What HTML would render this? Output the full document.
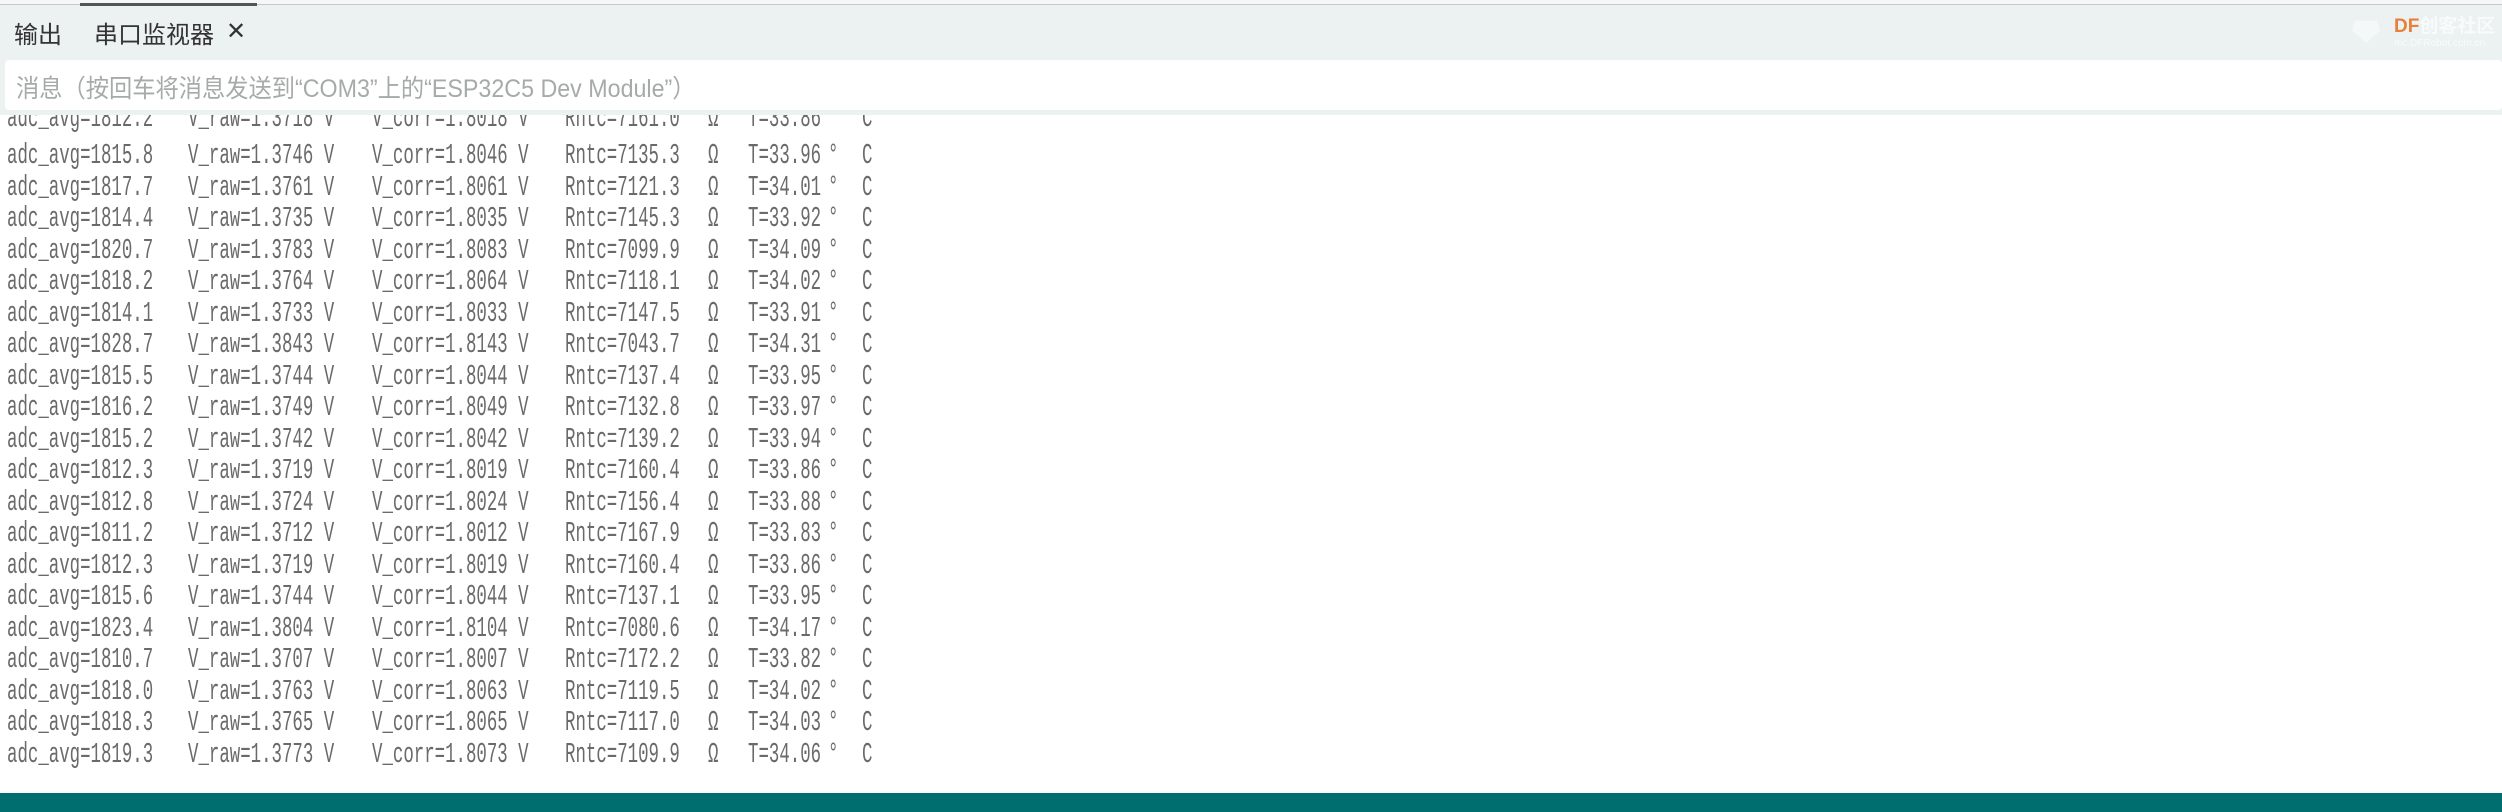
<!DOCTYPE html>
<html><head><meta charset="utf-8"><style>
*{margin:0;padding:0;box-sizing:border-box}
body{width:2502px;height:812px;overflow:hidden;background:#fff;position:relative;font-family:"Liberation Sans","Noto Sans CJK SC",sans-serif}
#top{position:absolute;left:0;top:0;width:2502px;height:5px;background:#f6f7f7;border-bottom:1px solid #c8c8c8}
#tabbar{position:absolute;left:80px;top:3px;width:177px;height:3px;background:#555}
#head{position:absolute;left:0;top:5px;width:2502px;height:110px;background:#ecf1f1}
.t{position:absolute;top:10px;font-size:24px;color:#333;white-space:nowrap}
#inp{position:absolute;left:5px;top:60px;width:2497px;height:50px;background:#fff;border-radius:4px}
#ph{position:absolute;left:11px;top:9px;font-size:25px;color:#a7aaaa;transform:scaleX(.93);transform-origin:left;white-space:nowrap}
#logo{position:absolute;left:2394px;top:6px;font-size:19px;font-weight:bold;color:#f8fbfb}
#logo small{display:block;font-size:10px;font-weight:normal;margin-top:0px}
#ico{position:absolute;left:2352px;top:10px;width:28px;height:28px;background:#f4f8f8;clip-path:polygon(10% 20%,90% 20%,100% 55%,50% 100%,0 55%)}
#log{position:absolute;left:0;top:115px;width:2502px;height:678px;overflow:hidden}
.l{position:absolute;height:32px;width:1000px;color:#6a6a6a;font-family:"Liberation Mono",monospace;font-size:29px;line-height:32px}
.l span{position:absolute;top:0;white-space:pre;transform:scaleX(.6);transform-origin:left}
#bot{position:absolute;left:0;top:793px;width:2502px;height:19px;background:#006e6e}
</style></head><body>
<div id="top"></div>
<div id="head">
<div class="t" style="left:14px">输出</div>
<div class="t" style="left:94px">串口监视器</div>
<div class="t" style="left:226px;font-size:24px;top:12px">✕</div>
<div id="ico"></div>
<div id="logo"><span style="color:#e8803a">DF</span>创客社区<small>mc.DFRobot.com.cn</small></div>
</div>
<div id="tabbar"></div>
<div id="inp"><div id="ph">消息（按回车将消息发送到“COM3”上的“ESP32C5 Dev Module”）</div></div>
<div id="log">
<script>
var d=[["1812.2","1.3718","1.8018","7161.0","33.86"],
["1815.8","1.3746","1.8046","7135.3","33.96"],["1817.7","1.3761","1.8061","7121.3","34.01"],["1814.4","1.3735","1.8035","7145.3","33.92"],["1820.7","1.3783","1.8083","7099.9","34.09"],["1818.2","1.3764","1.8064","7118.1","34.02"],["1814.1","1.3733","1.8033","7147.5","33.91"],["1828.7","1.3843","1.8143","7043.7","34.31"],["1815.5","1.3744","1.8044","7137.4","33.95"],["1816.2","1.3749","1.8049","7132.8","33.97"],["1815.2","1.3742","1.8042","7139.2","33.94"],["1812.3","1.3719","1.8019","7160.4","33.86"],["1812.8","1.3724","1.8024","7156.4","33.88"],["1811.2","1.3712","1.8012","7167.9","33.83"],["1812.3","1.3719","1.8019","7160.4","33.86"],["1815.6","1.3744","1.8044","7137.1","33.95"],["1823.4","1.3804","1.8104","7080.6","34.17"],["1810.7","1.3707","1.8007","7172.2","33.82"],["1818.0","1.3763","1.8063","7119.5","34.02"],["1818.3","1.3765","1.8065","7117.0","34.03"],["1819.3","1.3773","1.8073","7109.9","34.06"]];
var h="";
for(var i=0;i<d.length;i++){var r=d[i];var y=(i==0?-12:25+(i-1)*31.5);
h+='<div class="l" style="top:'+y+'px"><span style="left:7px">adc_avg='+r[0]+'</span><span style="left:188px">V_raw='+r[1]+' V</span><span style="left:372px">V_corr='+r[2]+' V</span><span style="left:565px">Rntc='+r[3]+'</span><span style="left:708px">Ω</span><span style="left:748px">T='+r[4]+'</span><span style="left:828px">°</span><span style="left:862px">C</span></div>';}
document.write(h);
</script>
</div>
<div id="bot"></div>
</body></html>
